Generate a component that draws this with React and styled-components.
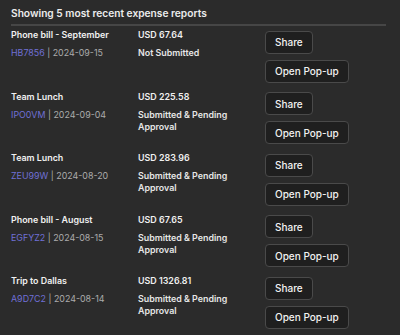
import React from "react";
import styled, { createGlobalStyle } from "styled-components";

const Global = createGlobalStyle`
  html, body { margin: 0; padding: 0; background: #2b2b2b; }
  body { font-family: Inter, "Noto Sans", sans-serif; color: #e8e8e8; -webkit-font-smoothing: antialiased; }
`;

const Page = styled.div`
  width: 400px;
  height: 335px;
  box-sizing: border-box;
  padding: 6px 14px 0 11px;
  background: #2b2b2b;
  overflow: hidden;
`;

const Header = styled.h2`
  margin: 0;
  font-size: 10.2px;
  line-height: 15px;
  font-weight: 600;
  color: #ececec;
  padding-bottom: 3px;
  border-bottom: 2px solid #464646;
`;

const List = styled.div`
  display: flex;
  flex-direction: column;
  gap: 7px;
  padding-top: 2px;
`;

const Row = styled.div`
  display: grid;
  grid-template-columns: 127px 127px auto;
  align-items: start;
`;

const Col = styled.div`
  display: flex;
  flex-direction: column;
  gap: 5px;
`;

const Title = styled.div`
  font-size: 8.9px;
  line-height: 14px;
  font-weight: 600;
  color: #f0f0f0;
`;

const Meta = styled.div`
  font-size: 8.9px;
  line-height: 12px;
  color: #ababab;
`;

const Code = styled.span`
  color: #7070d6;
`;

const Status = styled.div`
  font-size: 8.9px;
  line-height: 12px;
  font-weight: 600;
  color: #e6e6e6;
`;

const Buttons = styled.div`
  display: flex;
  flex-direction: column;
  align-items: flex-start;
  gap: 6px;
  padding-top: 2.5px;
`;

const Button = styled.button`
  height: 23px;
  padding: 0 9px;
  box-sizing: border-box;
  background: #1f1f1f;
  border: 1px solid #4a4a4a;
  border-radius: 4px;
  color: #f2f2f2;
  font-family: Inter, "Noto Sans", sans-serif;
  font-size: 10px;
  font-weight: 500;
  cursor: pointer;
`;

const reports = [
  { title: "Phone bill - September", code: "HB7856", date: "2024-09-15", amount: "USD 67.64", status: "Not Submitted" },
  { title: "Team Lunch", code: "IPO0VM", date: "2024-09-04", amount: "USD 225.58", status: "Submitted & Pending Approval" },
  { title: "Team Lunch", code: "ZEU99W", date: "2024-08-20", amount: "USD 283.96", status: "Submitted & Pending Approval" },
  { title: "Phone bill - August", code: "EGFYZ2", date: "2024-08-15", amount: "USD 67.65", status: "Submitted & Pending Approval" },
  { title: "Trip to Dallas", code: "A9D7C2", date: "2024-08-14", amount: "USD 1326.81", status: "Submitted & Pending Approval" },
];

export default function App() {
  return (
    <Page>
      <Global />
      <Header>Showing 5 most recent expense reports</Header>
      <List>
        {reports.map((r) => (
          <Row key={r.code}>
            <Col>
              <Title>{r.title}</Title>
              <Meta>
                <Code>{r.code}</Code> | {r.date}
              </Meta>
            </Col>
            <Col>
              <Title>{r.amount}</Title>
              <Status>{r.status}</Status>
            </Col>
            <Buttons>
              <Button>Share</Button>
              <Button>Open Pop-up</Button>
            </Buttons>
          </Row>
        ))}
      </List>
    </Page>
  );
}
